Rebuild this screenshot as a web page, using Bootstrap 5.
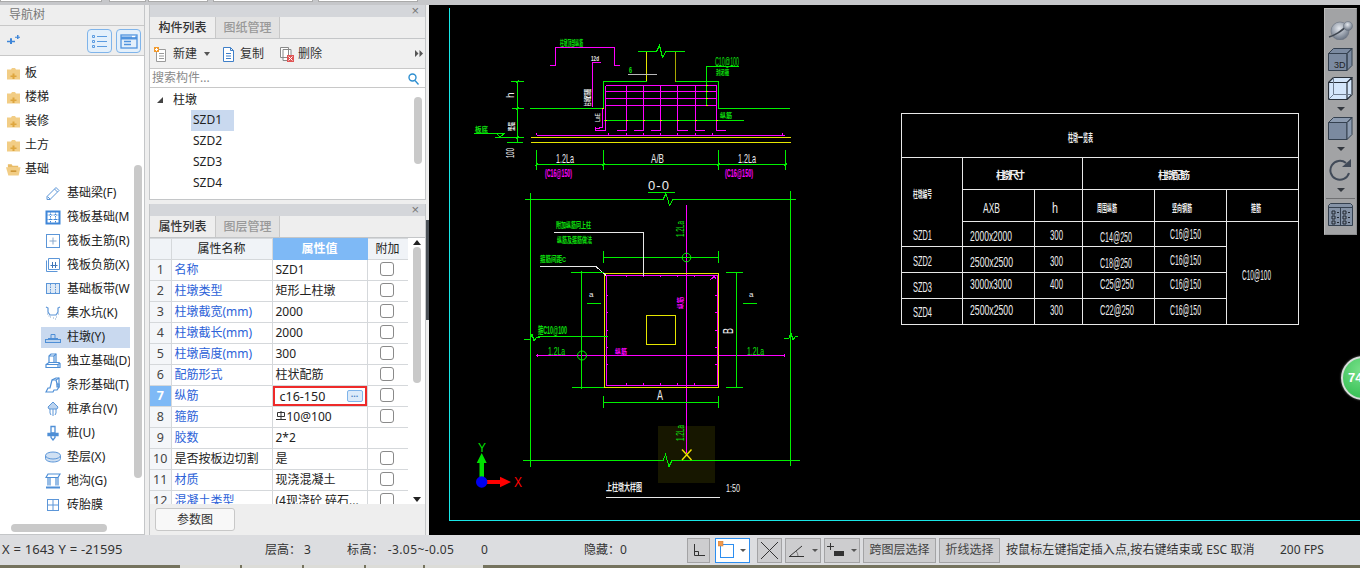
<!DOCTYPE html>
<html lang="zh-CN">
<head>
  <meta charset="UTF-8" />
  <meta name="viewport" content="width=device-width, initial-scale=1.0"/>
  <title>柱墩 - 导航树</title>
  <link href="https://cdn.jsdelivr.net/npm/bootstrap@5.3.2/dist/css/bootstrap.min.css" rel="stylesheet">
  <style>
    html, body { height: 100%; overflow: hidden; }
    body { font: 12px/1.2 "Noto Sans", "Noto Sans CJK SC", sans-serif; color: #222; background: #eee; }
    .app-root { height: 568px; width: 1360px; overflow: hidden; }

    .top-strip { height: 5px; background: #c6c7ca; flex: none; }
    .top-strip i { display: block; height: 2px; background: #fff; border: solid #aaa; border-width: 0 1px 1px 1px; }
    .ts-a { width: 102px; } .ts-b { width: 37px; margin-left: 7px; } .ts-c { width: 60px; margin-left: 2px; } .ts-d { width: 100px; margin-left: 5px; } .ts-e { width: 100px; margin-left: 5px; }

    .main-area { height: 530px; flex: none; }

    /* left tree */
    .nav-pane { width: 145px; border-right: 1px solid #c4c6c8; border-bottom: 1px solid #c4c6c8; background: #fff; flex: none; }
    .nav-title { height: 21px; background: #eee; color: #777; border-bottom: 1px solid #c8c8c8; padding: 1px 0 0 9px; }
    .nav-tools { height: 30px; background: #eee; border-bottom: 1px solid #c8c8c8; padding: 3px 3px 0 7px; }
    .nav-plus { margin-top: 6px; }
    .view-btn { width: 25px; height: 24px; background: #e4f0fb; border: 1px solid #7fb4ea; border-radius: 4px; padding: 0; margin-left: 4px; display: flex; align-items: center; justify-content: center; }
    .tree-box { height: 478px; padding-top: 5px; }
    .t-row { height: 24px; padding-left: 6px; white-space: nowrap; }
    .t-row svg { margin-right: 4px; flex: none; }
    .t-child { padding-left: 41px; }
    .t-inner { width: 89px; height: 21px; padding-left: 4px; overflow: hidden; }
    .t-inner svg { margin-right: 6px; }
    .t-sel { background: #c9d9ef; }
    .fake-vbar { position: absolute; width: 8px; background: #c9c9c9; border-radius: 4px; }
    .fake-hbar { position: absolute; height: 8px; background: #c9c9c9; border-radius: 4px; }
    .fb-nav { left: 134px; top: 109px; height: 313px; }
    .fb-navh { left: 11px; top: 468px; width: 96px; }

    /* middle */
    .gutter { width: 4px; flex: none; background: #eee; }
    .mid-col { width: 277px; flex: none; }
    .pane-cap { height: 12px; background: #d4d6da; padding-right: 6px; color: #777; font-size: 13px; line-height: 12px; text-align: right; font-family: "Liberation Sans", sans-serif; }
    .pane-top { height: 195px; background: #fff; border: solid #c4c6c8; border-width: 0 1px 1px 1px; flex: none; }
    .pane-bot { height: 331px; margin-top: 4px; border: solid #c4c6c8; border-width: 0 1px 0 1px; background: #eee; flex: none; }
    .tab-row { height: 22px; background: #eee; border-bottom: 1px solid #c4c6c8; }
    .tab-on, .tab-off { width: 65px; height: 21px; line-height: 21px; text-align: center; }
    .tab-on { color: #333; font-weight: 500; }
    .tab-off { color: #999; background: #e2e2e2; border: solid #c8c8c8; border-width: 0 1px; font-weight: 500; }
    .act-bar { height: 30px; background: #f0f0f0; border-bottom: 1px solid #c8c8c8; padding: 1px 0 0 4px; position: relative; }
    .act-item { color: #333; margin-right: 16px; white-space: nowrap; }
    .act-new { margin-right: 15px; }
    .act-item svg { margin-right: 5px; }
    .act-del svg { margin-right: 4px; }
    .act-caret { width: 0; height: 0; border: 3.5px solid transparent; border-top: 4px solid #555; border-bottom: 0; margin-left: 7px; margin-right: -3px; }
    .act-more { position: absolute; right: 2px; top: 11px; }
    .find-box { height: 19px; border-bottom: 1px solid #c8c8c8; padding: 1px 6px 0 2px; }
    .find-box input { border: 0; outline: 0; width: 240px; padding: 0; background: transparent; font: inherit; }
    .find-box input::placeholder { color: #8a8a8a; opacity: 1; }
    .list-box { height: 111px; padding-top: 2px; }
    .lb-row { height: 21px; padding-left: 41px; }
    .lb-head { padding-left: 7px; height: 20px; }
    .lb-tri { width: 0; height: 0; border-style: solid; border-width: 0 0 6px 6px; border-color: transparent transparent #444 transparent; margin-right: 10px; }
    .lb-sel { background: #c9d9ef; width: 43px; height: 21px; padding-left: 2px; line-height: 20px; }
    .lb-plain { padding-left: 2px; line-height: 20px; }
    .fb-list { right: 3px; top: 9px; height: 67px; }

    /* property grid */
    .prop-wrap { height: 266px; background: #fff; overflow: hidden; position: relative; }
    .prop-table { width: 258px; margin: 0; table-layout: fixed; border-collapse: collapse; font-size: 12px; }
    .prop-table th, .prop-table td { height: 21px; padding: 0 0 1px 3px; border: 1px solid #d5d8db; font-weight: 400; vertical-align: middle; white-space: nowrap; overflow: hidden; color: #222; line-height: 18px; box-shadow: none; }
    .prop-table th { background: #f0f3f7; text-align: center; padding: 0 0 1px 0; }
    .prop-table tr > :first-child { border-left: 0; }
    .prop-table th.col-now { background: #7eb9f6; color: #fff; font-weight: 600; border-color: #7eb9f6; }
    .prop-table td.row-no { background: #f4f6f9; text-align: center; padding: 0 0 1px 0; color: #444; font-size: 12.5px; }
    .prop-table td.row-now { background: #7eb9f6; color: #fff; font-weight: 700; }
    .prop-table td.p-name { color: #2c62d8; }
    .prop-table td.p-black { color: #222; }
    .prop-table td.p-chk { text-align: center; padding: 0 2px 2px 0; line-height: 14px; }
    .prop-table td.p-edit { padding: 0; position: relative; overflow: visible; }
    .edit-box { position: absolute; left: 0; top: 0; right: 0; bottom: 0; border: 2px solid #ee2a2a; padding-left: 5px; line-height: 17px; background: #fff; font-size: 12.5px; }
    .dot-btn { position: absolute; right: 2px; top: 2px; width: 16px; height: 12px; background: #dcebfa; border: 1px solid #7fb4ea; border-radius: 2px; color: #4b83c4; font: 700 9px/7px "Liberation Sans", sans-serif; text-align: center; }
    .prop-table .form-check-input { width: 14px; height: 14px; margin: 0; border: 1px solid #8a8a8a; border-radius: 3px; vertical-align: top; }
    .bar-sign { margin-right: 1px; vertical-align: -1px; }
    .prop-scroll { position: absolute; right: 0; top: 0; width: 17px; height: 100%; background: #fff; }
    .ps-up, .ps-dn { position: absolute; left: 5px; width: 0; height: 0; border: 4px solid transparent; }
    .ps-up { top: 2px; border-top: 0; border-bottom: 5px solid #222; }
    .ps-dn { bottom: 2px; border-bottom: 0; border-top: 5px solid #222; }
    .fb-prop { left: 5px; top: 9px; height: 136px; }
    .foot-bar { height: 31px; background: #eee; padding: 4px 0 0 5px; }
    .param-btn { width: 80px; height: 23px; font-size: 12px; line-height: 1; padding: 0; background: #f8f8f8; border: 1px solid #c8c8c8; border-radius: 3px; color: #333; }

    .split-bar { width: 3px; flex: none; background: #eee; position: relative; }
    .split-grip { position: absolute; left: 0; top: 215px; width: 3px; height: 100px; background: #4b5157; }

    /* canvas */
    .cad-view { flex: 1 1 auto; background: #000; position: relative; overflow: hidden; }
    .cad-view > svg.cad-sheet { display: block; }
    .cad-sheet text { font-family: "Liberation Sans", "Noto Sans CJK SC", sans-serif; }
    .cad-sheet .blob { font-weight: 700; }
    .ln { fill: none; shape-rendering: crispEdges; stroke-width: 1; }
    .lg { stroke: #00f000; } .lm { stroke: #f0f; } .ly { stroke: #e6e600; } .lw { stroke: #e8e8e8; } .lc { stroke: #19e6e6; } .lo { stroke: #a8a800; } .lt { stroke: #b8b8b8; }
    .tg { fill: #0ee00e; } .tm { fill: #f0f; } .tw { fill: #eee; } .tr { fill: #f00; }

    .view-bar { position: absolute; top: 3px; right: 3px; width: 33px; height: 227px; background: #a2a3a5; border: 1px solid #8d8e90; border-top-color: #bbb; border-left-color: #bbb; }
    .view-bar svg { display: block; flex: none; }
    .vb-m12 { margin-top: 11px; } .vb-m8 { margin-top: 8px; } .vb-m7 { margin-top: 7px; } .vb-m6 { margin-top: 6px; } .vb-m4 { margin-top: 4px; }
    .vb-line { width: 29px; height: 1px; background: #6f7072; margin-top: 6px; }
    .vb-caret { width: 0; height: 0; border: 4px solid transparent; border-top: 4px solid #33383f; border-bottom: 0; }

    .fps-ball { position: absolute; left: 912px; top: 351px; width: 44px; height: 44px; border-radius: 50%; background: radial-gradient(circle at 45% 30%, #78e08a, #3fc45c 70%); border: 2px solid #d8dedb; color: #fff; font: 700 13px/40px "Liberation Sans", sans-serif; padding-left: 5px; box-shadow: 0 0 2px #888; }

    /* status */
    .status-bar { height: 30px; background: #dcdde0; flex: none; padding-left: 2px; white-space: nowrap; color: #333; }
    .st-a { width: 263px; font-size: 13px; word-spacing: .5px; } .st-b { width: 82px; } .st-c { width: 134px; letter-spacing: .4px; } .st-d { width: 103px; } .st-e { width: 103px; }
    .st-btn { height: 25px; background: #cdcdcf; border: 1px solid #a3a3a5; padding: 0; display: flex; align-items: center; justify-content: center; color: #444; border-radius: 0; font-size: 12px; }
    .sb-1 { width: 23px; margin-right: 5px; }
    .sb-2 { width: 35px; margin-right: 7px; background: #fff; border-color: #2c8ef0; }
    .sb-3 { width: 25px; margin-right: 3px; }
    .sb-4 { width: 36px; margin-right: 3px; }
    .sb-5 { width: 36px; margin-right: 3px; }
    .sb-6 { width: 73px; margin-right: 3px; }
    .sb-7 { width: 61px; margin-right: 6px; }
    .st-msg { width: 274px; letter-spacing: .1px; }
    .btm-strip { height: 3px; background: #75735e; flex: none; }
    .btm-strip i { display: block; height: 3px; background: #dcdcd8; margin-right: 2px; }
    .bs-a { width: 60px; margin-left: 180px; }
    .bs-b { width: 60px; } .bs-c { width: 60px; } .bs-d { width: 57px; } .bs-e { width: 58px; }
  </style>
</head>
<body>

<svg width="0" height="0" class="position-absolute">
  <symbol id="folderShut" viewBox="0 0 15 15">
    <path d="M1 3.500h4l1-1.500h3l1 1.500h4v10H1z" fill="#f2cd85"/>
    <path d="M6.500 7.500h2v2h2v1.500h-2v2h-2v-2h-2V9.500h2z" fill="#dea63f"/>
  </symbol>
  <symbol id="folderOpen" viewBox="0 0 16 15">
    <path d="M2 2h4l1 1.500h6v2H2z" fill="#e8bb66"/>
    <path d="M0 5h15.500l-2 9H2.500z" fill="#f2cd85"/>
    <path d="M5 8.500h6V10H5z" fill="#c98f2a"/>
  </symbol>
</svg>

<div class="app-root d-flex flex-column">

  <div class="top-strip d-flex">
    <i class="ts-a"></i><i class="ts-b"></i><i class="ts-c"></i><i class="ts-d"></i><i class="ts-e"></i>
  </div>

  <div class="main-area d-flex">

    <!-- 导航树 -->
    <div class="nav-pane">
      <div class="nav-title d-flex align-items-center">导航树</div>
      <div class="nav-tools d-flex align-items-start">
        <svg class="nav-plus" width="13" height="9" viewBox="0 0 13 11" preserveAspectRatio="none"><path d="M0 7h3V4h2v3h3v2H5v2H3V9H0zM8 2h2V0h1.500v2H13v1.500h-1.500V5H10V3.500H8z" fill="#3f86d8"/></svg>
        <div class="ms-auto d-flex">
          <button class="view-btn" type="button"><svg width="17" height="15" viewBox="0 0 17 15" fill="none" stroke="#5b9be0"><path d="M1.500 1.500h2v2h-2zM1.500 6.500h2v2h-2zM1.500 11.500h2v2h-2zM6 2.500h10M6 7.500h10M6 12.500h10"/></svg></button>
          <button class="view-btn" type="button"><svg width="18" height="15" viewBox="0 0 18 15" fill="none" stroke="#4f93de" stroke-width="1.300"><rect x="1" y="1" width="16" height="13"/><path d="M1 4h16" stroke-width="3"/><path d="M4 7.500h7M4 10.500h7"/><path d="M12 2.500h3" stroke="#fff"/></svg></button>
        </div>
      </div>
      <div class="tree-box position-relative">
        <div class="t-row d-flex align-items-center"><svg width="15" height="15"><use href="#folderShut"/></svg>板</div>
        <div class="t-row d-flex align-items-center"><svg width="15" height="15"><use href="#folderShut"/></svg>楼梯</div>
        <div class="t-row d-flex align-items-center"><svg width="15" height="15"><use href="#folderShut"/></svg>装修</div>
        <div class="t-row d-flex align-items-center"><svg width="15" height="15"><use href="#folderShut"/></svg>土方</div>
        <div class="t-row d-flex align-items-center"><svg width="15" height="15"><use href="#folderOpen"/></svg>基础</div>

        <div class="t-row t-child d-flex align-items-center"><div class="t-inner d-flex align-items-center"><svg width="16" height="16" viewBox="0 0 16 16" fill="none" stroke="#5c96d8"><path d="M2 11.500L11 2.500l3 3-9 9H2zM2.500 11.500l3 3M9.500 4l3 3"/></svg>基础梁(F)</div></div>
        <div class="t-row t-child d-flex align-items-center"><div class="t-inner d-flex align-items-center"><svg width="16" height="16" viewBox="0 0 16 16" fill="none" stroke="#3f86d8"><rect x="1.500" y="2.500" width="13" height="12" stroke-width="2"/><path d="M1 6h14M1 10.500h14M5.500 2v12M10.500 2v12" stroke-dasharray="1.500 1"/></svg>筏板基础(M</div></div>
        <div class="t-row t-child d-flex align-items-center"><div class="t-inner d-flex align-items-center"><svg width="16" height="16" viewBox="0 0 16 16" fill="none" stroke="#5c96d8"><rect x="1.500" y="1.500" width="13" height="13"/><path d="M8 4.500v7M4.500 8h7" stroke="#8aa9cc"/></svg>筏板主筋(R)</div></div>
        <div class="t-row t-child d-flex align-items-center"><div class="t-inner d-flex align-items-center"><svg width="16" height="16" viewBox="0 0 16 16" fill="none" stroke="#5c96d8"><path d="M3.500 1.500h11v11h-11z"/><path d="M1.500 3.500v11h11"/><path d="M5.500 8.500h7M7.500 5v6M10.500 5v6" stroke="#3f76b8"/></svg>筏板负筋(X)</div></div>
        <div class="t-row t-child d-flex align-items-center"><div class="t-inner d-flex align-items-center"><svg width="16" height="16" viewBox="0 0 16 16" fill="none" stroke="#5c96d8"><rect x="1.500" y="2.500" width="13" height="10" fill="#dfeaf6"/><path d="M5.500 3v9M10.500 3v9" stroke-dasharray="1.500 1"/></svg>基础板带(W</div></div>
        <div class="t-row t-child d-flex align-items-center"><div class="t-inner d-flex align-items-center"><svg width="16" height="16" viewBox="0 0 16 16" fill="none" stroke="#5c96d8"><path d="M1 2l2 1v4l2 3h6l2-3V3l2-1" stroke-width="1.200"/><path d="M2 9h1M5 12h1M8 13h1M11 12h1M13 9h1M3.500 11h1M10 14h1" stroke="#8aa9cc"/></svg>集水坑(K)</div></div>
        <div class="t-row t-child d-flex align-items-center"><div class="t-inner t-sel d-flex align-items-center"><svg width="16" height="16" viewBox="0 0 16 16" fill="none" stroke="#4f8fd6"><path d="M6 5.500h4v4H6z"/><path d="M3 9.500h10"/><rect x="0.500" y="10.500" width="15" height="3" fill="#bcd3ee"/></svg>柱墩(Y)</div></div>
        <div class="t-row t-child d-flex align-items-center"><div class="t-inner d-flex align-items-center"><svg width="16" height="16" viewBox="0 0 16 16" fill="none" stroke="#4f8fd6" stroke-width="1.200"><path d="M4 10V3l2-2h5v9"/><path d="M4 3h5l2-2M9 3v7"/><path d="M1 14.500v-3l3-2h10l1 1v4zM1 11.500h12l2-1.500M13 11.500v3"/></svg>独立基础(D)</div></div>
        <div class="t-row t-child d-flex align-items-center"><div class="t-inner d-flex align-items-center"><svg width="16" height="16" viewBox="0 0 16 16" fill="none" stroke="#4f8fd6" stroke-width="1.200"><path d="M1 15l2-4h2l2-8 4-2h3v9l-2 3H9l-1 2z"/><path d="M7 3h4l3-2M11 3l2 7" /><path d="M12 7l2 0v3h-2z" fill="#9fc0e6"/></svg>条形基础(T)</div></div>
        <div class="t-row t-child d-flex align-items-center"><div class="t-inner d-flex align-items-center"><svg width="16" height="16" viewBox="0 0 16 16" fill="none" stroke="#5c96d8"><path d="M8 1l5 5-1 2H4L3 6z" fill="#bcd3ee"/><path d="M5 8v4l1 2M8 8v7M11 8v4l-1 2"/></svg>桩承台(V)</div></div>
        <div class="t-row t-child d-flex align-items-center"><div class="t-inner d-flex align-items-center"><svg width="16" height="16" viewBox="0 0 16 16" fill="none" stroke="#4f8fd6" stroke-width="1.300"><path d="M6 1.500h4v6.500H6z"/><path d="M3 8.500h10v2H3z" fill="#4f8fd6"/><path d="M6 10.500v2l2 2.500 2-2.500v-2"/></svg>桩(U)</div></div>
        <div class="t-row t-child d-flex align-items-center"><div class="t-inner d-flex align-items-center"><svg width="16" height="16" viewBox="0 0 16 16" fill="none" stroke="#5c96d8"><path d="M0.500 6.500v3c0 2 3.500 3.500 7.500 3.500s7.500-1.500 7.500-3.500v-3" fill="#cfe0f3"/><ellipse cx="8" cy="6.500" rx="7.500" ry="3.500" fill="#cfe0f3"/></svg>垫层(X)</div></div>
        <div class="t-row t-child d-flex align-items-center"><div class="t-inner d-flex align-items-center"><svg width="16" height="16" viewBox="0 0 16 16" fill="none" stroke="#4f8fd6" stroke-width="1.200"><path d="M1 4.500L3 1h12l-2 3.500zM1 4.500h12"/><path d="M3 4.500v8M5 4.500v8M11 4.500v8M13 4.500v8"/><path d="M1 14.500h14" stroke-width="2"/></svg>地沟(G)</div></div>
        <div class="t-row t-child d-flex align-items-center"><div class="t-inner d-flex align-items-center"><svg width="16" height="16" viewBox="0 0 16 16" fill="none" stroke="#5c96d8"><rect x="2.500" y="2.500" width="11" height="11"/><path d="M8 2.500v11M2.500 8h11"/></svg>砖胎膜</div></div>

        <div class="fake-vbar fb-nav"></div>
        <div class="fake-hbar fb-navh"></div>
      </div>
    </div>

    <div class="gutter"></div>

    <div class="mid-col">
      <!-- 构件列表 -->
      <div class="pane-top">
        <div class="pane-cap">×</div>
        <div class="tab-row d-flex">
          <div class="tab-on">构件列表</div>
          <div class="tab-off">图纸管理</div>
        </div>
        <div class="act-bar d-flex align-items-center">
          <div class="act-item act-new d-flex align-items-center">
            <svg width="14" height="15" viewBox="0 0 14 15" fill="#fff" stroke="#9a9a9a"><path d="M2.500 2.500h9v12h-9zM5 6.500h5M5 9h5M5 11.500h5"/><path d="M0 0h5v5H0z" fill="#f29a2e" stroke="none"/><path d="M1 2.500h3M2.500 1v3" stroke="#fff"/></svg>
            新建<span class="act-caret"></span>
          </div>
          <div class="act-item d-flex align-items-center">
            <svg width="13" height="15" viewBox="0 0 13 15" fill="#fff" stroke="#3f7fc8"><path d="M1.500 .5h7l3 3v11h-10zM8.500 .5v3h3M4 6.500h5M4 9h5M4 11.500h5"/></svg>
            复制
          </div>
          <div class="act-item act-del d-flex align-items-center">
            <svg width="14" height="15" viewBox="0 0 14 15" fill="#fff" stroke="#8a8a8a"><path d="M.5 .5h8v10h-8zM3 2.500h8v11H3z"/><path d="M7 8h7v7H7z" fill="#e05555" stroke="none"/><path d="M8.500 9.500l4 4M12.500 9.500l-4 4" stroke="#fff"/></svg>
            删除
          </div>
          <svg class="act-more" width="8" height="7" viewBox="0 0 8 7" fill="#555"><path d="M0 0l3.500 3.500L0 7zM4.500 0L8 3.500 4.500 7z"/></svg>
        </div>
        <div class="find-box d-flex align-items-center">
          <input type="text" placeholder="搜索构件...">
          <svg class="ms-auto" width="11" height="12" viewBox="0 0 11 12" fill="none" stroke="#2e8fd0" stroke-width="1.400"><circle cx="4.500" cy="4.500" r="3.500"/><path d="M7 7.500l3.500 4"/></svg>
        </div>
        <div class="list-box position-relative">
          <div class="lb-row lb-head d-flex align-items-center"><span class="lb-tri"></span>柱墩</div>
          <div class="lb-row"><div class="lb-sel">SZD1</div></div>
          <div class="lb-row"><div class="lb-plain">SZD2</div></div>
          <div class="lb-row"><div class="lb-plain">SZD3</div></div>
          <div class="lb-row"><div class="lb-plain">SZD4</div></div>
          <div class="fake-vbar fb-list"></div>
        </div>
      </div>

      <!-- 属性列表 -->
      <div class="pane-bot">
        <div class="pane-cap">×</div>
        <div class="tab-row d-flex">
          <div class="tab-on">属性列表</div>
          <div class="tab-off">图层管理</div>
        </div>
        <div class="prop-wrap">
          <table class="table prop-table">
            <colgroup><col style="width:21px"><col style="width:101px"><col style="width:95px"><col style="width:41px"></colgroup>
            <thead><tr><th></th><th>属性名称</th><th class="col-now">属性值</th><th>附加</th></tr></thead>
            <tbody>
              <tr><td class="row-no">1</td><td class="p-name">名称</td><td>SZD1</td><td class="p-chk"><input class="form-check-input" type="checkbox"></td></tr>
              <tr><td class="row-no">2</td><td class="p-name">柱墩类型</td><td>矩形上柱墩</td><td class="p-chk"><input class="form-check-input" type="checkbox"></td></tr>
              <tr><td class="row-no">3</td><td class="p-name">柱墩截宽(mm)</td><td>2000</td><td class="p-chk"><input class="form-check-input" type="checkbox"></td></tr>
              <tr><td class="row-no">4</td><td class="p-name">柱墩截长(mm)</td><td>2000</td><td class="p-chk"><input class="form-check-input" type="checkbox"></td></tr>
              <tr><td class="row-no">5</td><td class="p-name">柱墩高度(mm)</td><td>300</td><td class="p-chk"><input class="form-check-input" type="checkbox"></td></tr>
              <tr><td class="row-no">6</td><td class="p-name">配筋形式</td><td>柱状配筋</td><td class="p-chk"><input class="form-check-input" type="checkbox"></td></tr>
              <tr><td class="row-no row-now">7</td><td class="p-name">纵筋</td><td class="p-edit"><div class="edit-box">c16-150<span class="dot-btn">...</span></div></td><td class="p-chk"><input class="form-check-input" type="checkbox"></td></tr>
              <tr><td class="row-no">8</td><td class="p-name">箍筋</td><td><svg class="bar-sign" width="10" height="11" viewBox="0 0 10 11" fill="none" stroke="#333"><path d="M1.500 1.500h7v4h-7zM5 0v8M0 8.500h10"/></svg>10@100</td><td class="p-chk"><input class="form-check-input" type="checkbox"></td></tr>
              <tr><td class="row-no">9</td><td class="p-name">胶数</td><td>2*2</td><td class="p-chk"></td></tr>
              <tr><td class="row-no">10</td><td class="p-name p-black">是否按板边切割</td><td>是</td><td class="p-chk"><input class="form-check-input" type="checkbox"></td></tr>
              <tr><td class="row-no">11</td><td class="p-name">材质</td><td>现浇混凝土</td><td class="p-chk"><input class="form-check-input" type="checkbox"></td></tr>
              <tr><td class="row-no">12</td><td class="p-name">混凝土类型</td><td>(4现浇砼 碎石...</td><td class="p-chk"><input class="form-check-input" type="checkbox"></td></tr>
            </tbody>
          </table>
          <div class="prop-scroll">
            <span class="ps-up"></span>
            <div class="fake-vbar fb-prop"></div>
            <span class="ps-dn"></span>
          </div>
        </div>
        <div class="foot-bar"><button class="btn param-btn" type="button">参数图</button></div>
      </div>
    </div>

    <div class="split-bar"><div class="split-grip"></div></div>

    <!-- 绘图区 -->
    <div class="cad-view">
      <svg class="cad-sheet" width="931" height="530" viewBox="429 5 931 530">
        <path class="ln lc" d="M449.500 8V520.500H1360"/>

        <!-- 剖面 -->
        <path class="ln lm" d="M550 65.500h5.500V47.500h59v18h5.500"/>
        <path class="ln lg" d="M638 51.500h18.500l3-6 3 12 3.500-6H685"/>
        <path class="ln ly" d="M646.500 51.500V81.500"/>
        <path class="ln lo" d="M675.500 51.500V81.500"/>
        <path class="ln lg" d="M530 108.500h73.500V81.500h43M675.500 81.500h43v27H790"/>
        <path class="ln lm" d="M605.500 85.500h111M605.500 91.500h111M605.500 98.500h111M605.500 105.500h111"/>
        <path class="ln lm" d="M605.500 85.500V130.500H595.500V126.500M626.500 85.500V130.500H617M643.500 85.500V130.500H634M660.500 85.500V130.500H651M677.500 85.500V130.500H688M695.500 85.500V130.500H705M716.500 85.500V130.500H726"/>
        <path class="ln lm" d="M602.500 108.500V127l-6 2"/>
        <path class="ln lg" d="M604 120.500H744"/>
        <path class="ln lg" d="M706.500 105V66.500H739"/>
        <path class="ln ly" d="M706 85.500h2M706 91.500h2M706 98.500h2M706 105.500h2M605 120h2M626 120h2M643 120h2M660 120h2M677 120h2M695 120h2M716 120h2M602 108h2"/>
        <path class="ln lm" d="M592.500 107V62.500H601"/>
        <path class="ln lt" d="M628 74.500h29"/>
        <path class="ln lm" d="M536.500 135.500H785M536.500 133v2M608 133v3M626 133v3M643 133v3M660 133v3M677 133v3M695 133v3M712 133v3M782 133v3"/>
        <path class="ln ly" d="M531 137.500H791M531 142.500H791"/>
        <path class="ln lg" d="M517.500 81V143M511 81.500h13M512 108.500h12M495 137.500h29M507 142.500h16M516 83l3-3M516 110l3-3M516 139l3-3"/>
        <path class="ln lg" d="M474 133.500h31M497 134l3 3 4-3"/>
        <path class="ln lg" d="M536.500 150V170M603.500 150V170M718.500 150V170M785.500 150V170M536 164.500H787M535 166l3-3M602 166l3-3M717 166l3-3M784 166l3-3"/>
        <path class="ln lg" d="M648 192.500h27"/>

        <text class="tg blob" x="560" y="46" font-size="8" textLength="23" lengthAdjust="spacingAndGlyphs">柱墩顶部纵筋</text>
        <text class="tw blob" x="591" y="61" font-size="8" textLength="8" lengthAdjust="spacingAndGlyphs">12d</text>
        <text class="tg" x="715" y="66" font-size="12" textLength="24" lengthAdjust="spacingAndGlyphs">C10@100</text>
        <text class="tg blob" x="716" y="75" font-size="7" textLength="13" lengthAdjust="spacingAndGlyphs">封闭箍</text>
        <text class="tg blob" x="629" y="73" font-size="9" textLength="3" lengthAdjust="spacingAndGlyphs">6</text>
        <text class="tg blob" x="720" y="118" font-size="7" textLength="12" lengthAdjust="spacingAndGlyphs">纵筋</text>
        <text class="tw blob" x="590" y="106" font-size="7" textLength="17" lengthAdjust="spacingAndGlyphs" transform="rotate(-90 590 106)">柱墩配筋图</text>
        <text class="tw" x="600" y="122" font-size="7" textLength="9" lengthAdjust="spacingAndGlyphs" transform="rotate(-90 600 122)">LaE</text>
        <text class="tw" x="514" y="98" font-size="10" transform="rotate(-90 514 98)">h</text>
        <text class="tw blob" x="514" y="131" font-size="7" textLength="9" lengthAdjust="spacingAndGlyphs" transform="rotate(-90 514 131)">垫层</text>
        <text class="tw" x="514" y="158" font-size="11" textLength="10" lengthAdjust="spacingAndGlyphs" transform="rotate(-90 514 158)">100</text>
        <text class="tg blob" x="475" y="132" font-size="7" textLength="13" lengthAdjust="spacingAndGlyphs">板底</text>
        <text class="tw" x="556" y="163" font-size="13" textLength="18" lengthAdjust="spacingAndGlyphs">1.2La</text>
        <text class="tw" x="651" y="163" font-size="13" textLength="13" lengthAdjust="spacingAndGlyphs">A/B</text>
        <text class="tw" x="738" y="163" font-size="13" textLength="18" lengthAdjust="spacingAndGlyphs">1.2La</text>
        <text class="tm blob" x="545" y="177" font-size="10" textLength="27" lengthAdjust="spacingAndGlyphs">(C16@150)</text>
        <text class="tm blob" x="725" y="177" font-size="10" textLength="28" lengthAdjust="spacingAndGlyphs">(C16@150)</text>
        <text class="tw" x="648" y="190" font-size="13" textLength="21" lengthAdjust="spacing">0-0</text>

        <!-- 平面 -->
        <path class="ln lg" d="M525 199.500H663l3-6 3.500 12 3.500-6H796"/>
        <path class="ln lg" d="M530.500 193V467M790.500 191V466"/>
        <path class="ln lg" d="M524 339l6 0 2-5 2 7 3-4h3M784 338l5 0 2-5 2 7 3-4h2"/>
        <rect x="658" y="426" width="57" height="57" fill="#171700"/>
        <path class="ln lg" d="M523 460.500H663l2.500-6 3.500 12 3-6H800"/>
        <path class="ln lm" d="M686.500 205V453M536 355.500H785M537 354v3M784 354v3"/>
        <path class="ln ly" d="M604 273h114v114H604z"/>
        <path class="ln lm" d="M606 275h111v110H606z"/>
        <path class="ln lm" d="M626.500 275v2M643.500 275v2M660.500 275v2M677.500 275v2M694.500 275v2M626.500 383v2M643.500 383v2M660.500 383v2M677.500 383v2M694.500 383v2M606 295.500h2M606 312.500h2M606 330h2M606 347h2M606 364h2M715 295.500h2M715 312.500h2M715 330h2M715 347h2M715 364h2M710 280l6-5M713 275l3 4"/>
        <path class="ln ly" d="M646.500 315.500h29v29h-29z"/>
        <path class="ln lg" d="M603.500 257.500H718.500M603.500 251V263M718.500 251V263"/>
        <circle cx="686.500" cy="257.500" r="4.300" fill="none" stroke="#00f000"/>
        <path class="ln lw" d="M554 232.500h89.500V276"/>
        <path class="ln lw" d="M540 266.500h56l10 9"/>
        <path class="ln lg" d="M571 272.500h33M572 387.500h32M581.500 271V389"/>
        <circle cx="582" cy="355.500" r="4.500" fill="none" stroke="#00f000"/>
        <path class="ln lg" d="M726 272.500h17M726 387.500h17M736.500 272V387"/>
        <path class="ln lg" d="M587 303.500h14M743 303.500h14"/>
        <path class="ln lg" d="M538 336.500H607.500"/>
        <path class="ln lg" d="M603.500 402.500H718.500M603.500 396V408M718.500 396V408"/>
        <path d="M682 449.500l9.500 10.500M691.500 449.500L682 460" stroke="#f0e000" stroke-width="1.400" fill="none"/>
        <path class="ln lw" d="M606 497.500H720"/>

        <text class="tg blob" x="556" y="228" font-size="8" textLength="35" lengthAdjust="spacingAndGlyphs">附加纵筋同上柱</text>
        <text class="tg blob" x="557" y="243" font-size="8" textLength="35" lengthAdjust="spacingAndGlyphs">纵筋及箍筋做法</text>
        <text class="tg blob" x="540" y="262" font-size="8" textLength="26" lengthAdjust="spacingAndGlyphs">箍筋间距C</text>
        <text class="tg blob" x="538" y="334" font-size="10" textLength="29" lengthAdjust="spacingAndGlyphs">箍C10@100</text>
        <text class="tg" x="548" y="355" font-size="10" textLength="17" lengthAdjust="spacingAndGlyphs">1.2La</text>
        <text class="tg" x="747" y="355" font-size="10" textLength="17" lengthAdjust="spacingAndGlyphs">1.2La</text>
        <text class="tg" x="684" y="237" font-size="10" textLength="16" lengthAdjust="spacingAndGlyphs" transform="rotate(-90 684 237)">1.2La</text>
        <text class="tg" x="684" y="441" font-size="10" textLength="16" lengthAdjust="spacingAndGlyphs" transform="rotate(-90 684 441)">1.2La</text>
        <text class="tm blob" x="615" y="354" font-size="7" textLength="12" lengthAdjust="spacingAndGlyphs">纵筋</text>
        <text class="tm blob" x="683" y="309" font-size="7" textLength="12" lengthAdjust="spacingAndGlyphs" transform="rotate(-90 683 309)">纵筋</text>
        <text class="tw" x="589" y="297" font-size="8">a</text>
        <text class="tw" x="749" y="297" font-size="8">a</text>
        <text class="tw" x="733" y="334" font-size="15" textLength="6" lengthAdjust="spacingAndGlyphs" transform="rotate(-90 733 334)">B</text>
        <text class="tw" x="657" y="400" font-size="15" textLength="6" lengthAdjust="spacingAndGlyphs">A</text>
        <text class="tw blob" x="606" y="491" font-size="10" textLength="36" lengthAdjust="spacingAndGlyphs">上柱墩大样图</text>
        <text class="tw" x="726" y="492" font-size="10" textLength="14" lengthAdjust="spacingAndGlyphs">1:50</text>

        <!-- 坐标 -->
        <path d="M479.500 478V463H476.700L481.700 453 486.700 463H484V478z" fill="#00e000"/>
        <path d="M487 480H500V476.700L511 482 500 487.300V484H487z" fill="#f00"/>
        <circle cx="481.700" cy="482" r="5.700" fill="#0000f0"/>
        <text x="478" y="452" font-size="12" fill="#00e000" textLength="8" lengthAdjust="spacingAndGlyphs">Y</text>
        <text class="tr" x="514" y="487" font-size="14" textLength="8" lengthAdjust="spacingAndGlyphs">X</text>

        <!-- 一览表 -->
        <path class="ln lw" d="M901.500 113.500H1298.500V324H901.500zM901.500 157.500H1298.500M962.500 189.500H1298.500M962.500 221.500H1298.500M901.500 246.500H1226.500M901.500 272.500H1226.500M901.500 298.500H1226.500M962.500 157.500V324M1034.500 189.500V324M1082.500 157.500V324M1154.500 189.500V324M1226.500 189.500V324"/>
        <g class="tw blob" font-size="10">
          <text x="1068" y="142" font-size="11" textLength="25" lengthAdjust="spacingAndGlyphs">柱墩一览表</text>
          <text x="913" y="198" textLength="19" lengthAdjust="spacingAndGlyphs">柱墩编号</text>
          <text x="996" y="179" textLength="29" lengthAdjust="spacing">柱墩尺寸</text>
          <text x="1158" y="179" textLength="32" lengthAdjust="spacing">柱墩配筋</text>
          <text x="1097" y="212" textLength="20" lengthAdjust="spacingAndGlyphs">周围纵筋</text>
          <text x="1172" y="212" textLength="20" lengthAdjust="spacingAndGlyphs">竖向钢筋</text>
          <text x="1251" y="212" textLength="10" lengthAdjust="spacingAndGlyphs">箍筋</text>
        </g>
        <g class="tw" font-size="14">
          <text x="983" y="213" textLength="17" lengthAdjust="spacingAndGlyphs">AXB</text>
          <text x="1052" y="213" textLength="6" lengthAdjust="spacingAndGlyphs">h</text>

          <text x="913" y="240" textLength="19" lengthAdjust="spacingAndGlyphs">SZD1</text>
          <text x="970" y="241" textLength="42" lengthAdjust="spacingAndGlyphs">2000x2000</text>
          <text x="1050" y="240" textLength="13" lengthAdjust="spacingAndGlyphs">300</text>
          <text x="1100" y="242" textLength="32" lengthAdjust="spacingAndGlyphs">C14@250</text>
          <text x="1170" y="239" textLength="31" lengthAdjust="spacingAndGlyphs">C16@150</text>

          <text x="913" y="266" textLength="19" lengthAdjust="spacingAndGlyphs">SZD2</text>
          <text x="970" y="267" textLength="43" lengthAdjust="spacingAndGlyphs">2500x2500</text>
          <text x="1050" y="266" textLength="13" lengthAdjust="spacingAndGlyphs">300</text>
          <text x="1100" y="268" textLength="32" lengthAdjust="spacingAndGlyphs">C18@250</text>
          <text x="1170" y="265" textLength="31" lengthAdjust="spacingAndGlyphs">C16@150</text>

          <text x="913" y="292" textLength="19" lengthAdjust="spacingAndGlyphs">SZD3</text>
          <text x="970" y="289" textLength="42" lengthAdjust="spacingAndGlyphs">3000x3000</text>
          <text x="1050" y="289" textLength="13" lengthAdjust="spacingAndGlyphs">400</text>
          <text x="1100" y="289" textLength="34" lengthAdjust="spacingAndGlyphs">C25@250</text>
          <text x="1170" y="289" textLength="31" lengthAdjust="spacingAndGlyphs">C16@150</text>

          <text x="913" y="317" textLength="19" lengthAdjust="spacingAndGlyphs">SZD4</text>
          <text x="970" y="315" textLength="43" lengthAdjust="spacingAndGlyphs">2500x2500</text>
          <text x="1050" y="315" textLength="13" lengthAdjust="spacingAndGlyphs">300</text>
          <text x="1100" y="315" textLength="34" lengthAdjust="spacingAndGlyphs">C22@250</text>
          <text x="1170" y="315" textLength="31" lengthAdjust="spacingAndGlyphs">C16@150</text>

          <text x="1242" y="280" textLength="29" lengthAdjust="spacingAndGlyphs">C10@100</text>
        </g>
      </svg>

      <div class="view-bar d-flex flex-column align-items-center">
        <svg class="vb-m12" width="26" height="20" viewBox="0 0 26 20"><defs><radialGradient id="sph" cx=".45" cy=".35" r=".7"><stop offset="0" stop-color="#e4e8ee"/><stop offset="1" stop-color="#5f6a7a"/></radialGradient></defs><circle cx="12" cy="11" r="9" fill="url(#sph)" stroke="#6a7280" stroke-width=".6"/><path d="M1 17C5 16 15 11 19 5" stroke="#3f4650" stroke-width="1.500" fill="none"/><circle cx="20" cy="6" r="4.500" fill="url(#sph)" stroke="#6a7280" stroke-width=".6"/></svg>
        <svg class="vb-m8" width="25" height="23" viewBox="0 0 25 23" fill="#7b8aa0" stroke="#34404f"><path d="M.5 5.500h18.500v17H.5zM.5 5.500l5-5h18.500l-5 5zM19 5.500l5-5v17l-5 5z"/><text x="6" y="20" font-size="9" fill="#222" stroke="none" font-family="Liberation Sans, sans-serif">3D</text></svg>
        <svg class="vb-m6" width="25" height="23" viewBox="0 0 25 23" fill="#d4e6fb" stroke="#28303a"><path d="M.5 5.500h18.500v17H.5zM.5 5.500l5-5h18.500l-5 5zM19 5.500l5-5v17l-5 5z" stroke-width="1.200"/><path d="M5.500 .5v17h18.500M5.500 17.500l-5 5" fill="none" stroke="#6f7d90"/></svg>
        <span class="vb-caret vb-m7"></span>
        <svg class="vb-m6" width="25" height="23" viewBox="0 0 25 23" fill="#7b8aa0" stroke="#34404f"><path d="M.5 5.500h18.500v17H.5z"/><path d="M.5 5.500l5-5h18.500l-5 5zM19 5.500l5-5v17l-5 5z" fill="#8c9bb0"/></svg>
        <span class="vb-caret vb-m7"></span>
        <svg class="vb-m8" width="25" height="22" viewBox="0 0 25 22" fill="none" stroke="#414a58" stroke-width="2"><path d="M21 14a9.500 9.500 0 1 1-3-10"/><path d="M14 8h9V0z" fill="#414a58" stroke="none"/></svg>
        <span class="vb-caret vb-m7"></span>
        <div class="vb-line"></div>
        <svg class="vb-m4" width="25" height="23" viewBox="0 0 25 23" fill="none" stroke="#34404f"><path d="M.5 2.500l2-2h20l2 2v20H.5z" fill="#8492a6"/><path d="M.5 4.500h24M12.500 5v17"/><path d="M4 8h3v3H4zM4 13h3v3H4zM4 18h3v3H4zM9 9.500h2M9 14.500h2M9 19.500h2M15 8h3v3h-3zM15 13h3v3h-3zM15 18h3v3h-3zM20 9.500h2M20 14.500h2M20 19.500h2" stroke="#20262e"/></svg>
      </div>

      <div class="fps-ball">74</div>
    </div>
  </div>

  <div class="status-bar d-flex align-items-center">
    <span class="st-a">X = 1643 Y = -21595</span>
    <span class="st-b">层高： 3</span>
    <span class="st-c">标高： -3.05~-0.05</span>
    <span class="st-d">0</span>
    <span class="st-e">隐藏：0</span>
    <button class="st-btn sb-1" type="button"><svg width="14" height="14" viewBox="0 0 14 14" fill="none" stroke="#333"><path d="M2.500 1v11.500H13M2.500 8.500h4v4"/></svg></button>
    <button class="st-btn sb-2" type="button"><svg width="29" height="18" viewBox="0 0 29 18" fill="none"><rect x="2.500" y="3.500" width="13" height="13" stroke="#2c8ef0"/><rect x="0" y="0" width="5" height="5" fill="#f09a50" stroke="#c87a30" stroke-width=".5"/><path d="M22 8h6l-3 3z" fill="#555"/></svg></button>
    <button class="st-btn sb-3" type="button"><svg width="19" height="19" viewBox="0 0 19 19" fill="none" stroke="#333"><path d="M1 1l17 17M18 1L1 18"/></svg></button>
    <button class="st-btn sb-4" type="button"><svg width="30" height="16" viewBox="0 0 30 16" fill="none" stroke="#333"><path d="M1 14.500h15M2 14L14 4"/><path d="M8 9a7 7 0 0 1 2 5" stroke="#777"/><path d="M24 7h6l-3 3z" fill="#555" stroke="none"/></svg></button>
    <button class="st-btn sb-5" type="button"><svg width="30" height="16" viewBox="0 0 30 16"><path d="M0 4.500h7M3.500 1v7" stroke="#333" fill="none"/><rect x="7" y="9" width="10" height="5" fill="#333"/><path d="M24 7h6l-3 3z" fill="#555"/></svg></button>
    <button class="st-btn sb-6" type="button">跨图层选择</button>
    <button class="st-btn sb-7" type="button">折线选择</button>
    <span class="st-msg">按鼠标左键指定插入点,按右键结束或 ESC 取消</span>
    <span>200 FPS</span>
  </div>

  <div class="btm-strip d-flex">
    <i class="bs-a"></i><i class="bs-b"></i><i class="bs-c"></i><i class="bs-d"></i><i class="bs-e"></i>
  </div>
</div>

<script src="https://cdn.jsdelivr.net/npm/bootstrap@5.3.2/dist/js/bootstrap.bundle.min.js"></script>
</body>
</html>
